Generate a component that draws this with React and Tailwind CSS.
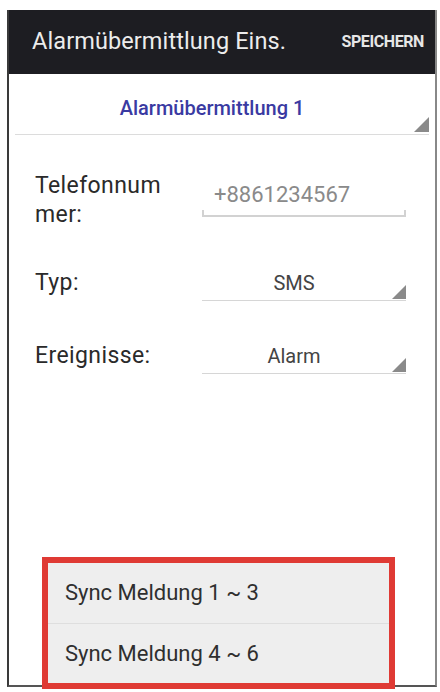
import React from 'react';

const font = { fontFamily: 'Roboto, "Noto Sans", sans-serif' };

function Corner({ className }) {
    return (
        <svg viewBox="0 0 14 14" className={className}>
            <polygon points="14,0 14,14 0,14" fill="#8a8a8a" />
        </svg>
    );
}

function SpinnerField({ value }) {
    return (
        <div className="relative w-[204px] h-[36px] flex items-center justify-center pr-[20px] border-b border-[#d6d6d6]">
            <span className="text-[20px] text-[#444]">{value}</span>
            <Corner className="absolute right-0 bottom-[1px] w-[14px] h-[14px]" />
        </div>
    );
}

export default function App() {
    return (
        <div className="relative w-[440px] h-[692px] bg-white overflow-hidden pt-[10px] pl-[7px]" style={font}>
            <div className="w-[430px] h-[677px] border-l-2 border-r-2 border-b-2 border-l-[#3a3a3a] border-r-[#888] border-b-[#555] flex flex-col">
                {/* Action bar */}
                <div className="h-[64px] bg-[#1d1d22] flex items-center justify-between pl-[23px] pr-[11px]">
                    <span className="text-[23.5px] text-[#ececec] tracking-[0.1px]">Alarmübermittlung Eins.</span>
                    <span className="text-[16px] font-bold text-[#e6e6e6] tracking-[-0.4px]">SPEICHERN</span>
                </div>

                {/* Profile spinner */}
                <div className="relative mx-[6px] h-[61px] flex items-center justify-center pr-[20px] border-b border-[#dcdcdc]">
                    <span className="text-[20px] font-medium text-[#3a3aa2] mt-[8px]">Alarmübermittlung 1</span>
                    <Corner className="absolute right-0 bottom-[2px] w-[15px] h-[15px]" />
                </div>

                {/* Form */}
                <div className="flex flex-col pl-[26px] pt-[36px] text-[23px] text-[#2a2a2a]">
                    <div className="flex items-start">
                        <div className="w-[167px] leading-[29px] tracking-[0.4px]">Telefonnum<br />mer:</div>
                        <div className="relative w-[204px] h-[46px] flex items-center pl-[12px] pt-[2px] border-b-2 border-[#d2d2d2]">
                            <span className="text-[22px] text-[#8a8a8a]">+8861234567</span>
                            <div className="absolute left-0 bottom-0 w-[2px] h-[5px] bg-[#d2d2d2]" />
                            <div className="absolute right-0 bottom-0 w-[2px] h-[5px] bg-[#d2d2d2]" />
                        </div>
                    </div>

                    <div className="flex items-center mt-[36px]">
                        <div className="w-[167px] tracking-[0.4px]">Typ:</div>
                        <SpinnerField value="SMS" />
                    </div>

                    <div className="flex items-center mt-[37px]">
                        <div className="w-[167px] tracking-[0.4px]">Ereignisse:</div>
                        <SpinnerField value="Alarm" />
                    </div>
                </div>
            </div>

            {/* Popup menu (highlighted) */}
            <div className="absolute left-[42px] top-[557px] w-[353px] h-[132px] border-[6px] border-[#df3a34] bg-[#eeeeee] flex flex-col">
                <div className="flex-1 flex items-center pl-[17px] border-b border-[#dedede]">
                    <span className="text-[22px] text-[#2f2f2f]">Sync Meldung 1 ~ 3</span>
                </div>
                <div className="flex-1 flex items-center pl-[17px]">
                    <span className="text-[22px] text-[#2f2f2f]">Sync Meldung 4 ~ 6</span>
                </div>
            </div>
        </div>
    );
}
